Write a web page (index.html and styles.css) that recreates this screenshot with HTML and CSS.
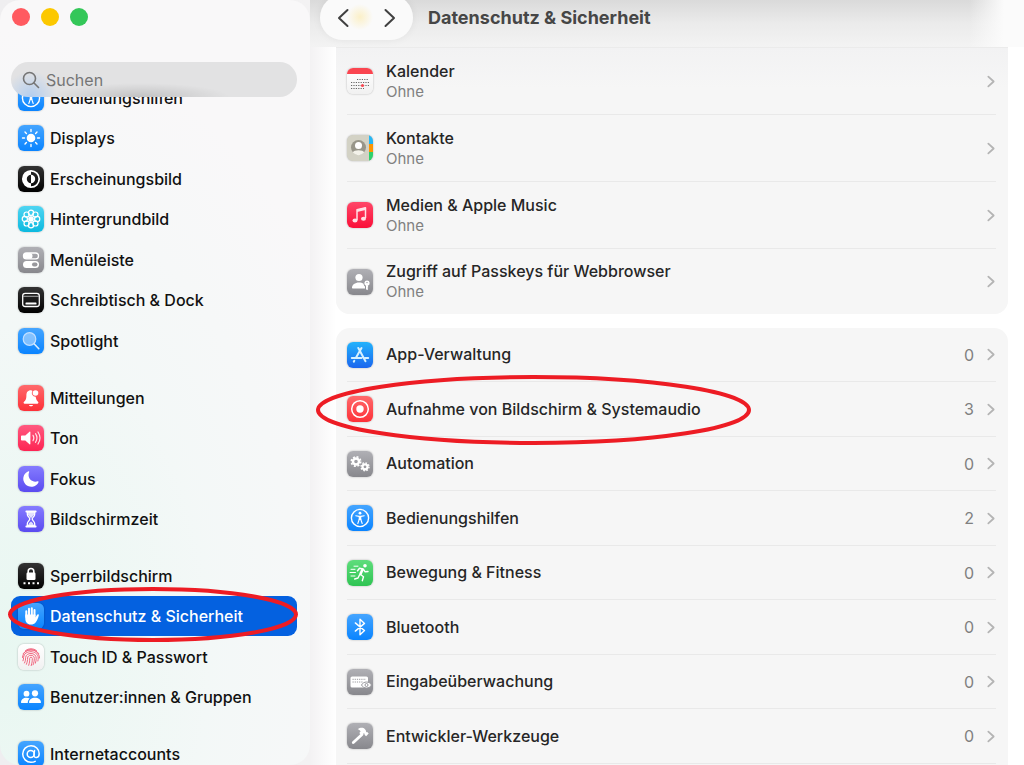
FILE: index.html
```html
<!DOCTYPE html>
<html lang="de">
<head>
    <meta charset="UTF-8">
    <meta name="viewport" content="width=device-width, initial-scale=1.0">
    <title>Datenschutz &amp; Sicherheit</title>
    <link rel="stylesheet" href="styles.css">
</head>
<body>
    <aside class="sidebar">
        <div class="sidebar-header">
            <div class="window-controls">
                <button type="button" class="control close" aria-label="Schließen"></button>
                <button type="button" class="control minimize" aria-label="Minimieren"></button>
                <button type="button" class="control maximize" aria-label="Vollbild"></button>
            </div>
            <label class="search">
                <svg viewBox="0 0 18 18" width="18" height="18" fill="none" stroke="#757575" stroke-width="1.6" stroke-linecap="round"><circle cx="7.5" cy="7.5" r="6"/><path d="M12 12l4.500 4.500"/></svg>
                <input type="text" placeholder="Suchen" aria-label="Suchen">
            </label>
        </div>

        <nav class="menu">
            <div class="menu-group">
                <a href="#" class="menu-item">
                    <svg class="icon blue" viewBox="0 0 26 26" fill="none" stroke="#fff"><circle cx="13" cy="13" r="8.600" stroke-width="1.4"/><circle cx="13" cy="8.200" r="1.400" fill="#fff" stroke="none"/><path d="M8.800 10.700l3.200.7h2l3.200-.7" stroke-width="1.100" stroke-linecap="round"/><path d="M13 11v4" stroke-width="2.600"/><path d="M12.200 14.500l-1.400 4M13.800 14.500l1.400 4" stroke-width="1.100" stroke-linecap="round"/></svg>
                    Bedienungshilfen
                </a>
                <a href="#" class="menu-item">
                    <svg class="icon blue" viewBox="0 0 26 26"><circle cx="13" cy="13" r="4.300" fill="#fff"/><path d="M13 4.500v2M13 19.500v2M4.500 13h2M19.500 13h2M7 7l1.400 1.400M17.600 17.600L19 19M7 19l1.400-1.400M17.600 8.400L19 7" stroke="#fff" stroke-width="1.400" stroke-linecap="round"/></svg>
                    Displays
                </a>
                <a href="#" class="menu-item">
                    <svg class="icon black" viewBox="0 0 26 26"><circle cx="13" cy="13" r="8.200" fill="none" stroke="#fff" stroke-width="1.700"/><path d="M13 4.800a8.200 8.200 0 0 0 0 16.400v-4a4.200 4.200 0 0 1 0-8.400z" fill="#fff"/><path d="M13 8.800a4.200 4.200 0 0 1 0 8.400z" fill="#fff"/></svg>
                    Erscheinungsbild
                </a>
                <a href="#" class="menu-item">
                    <svg class="icon cyan" viewBox="0 0 26 26" fill="none" stroke="#fff" stroke-width="1.200"><circle cx="13" cy="6.800" r="2.600"/><circle cx="17.400" cy="8.600" r="2.600"/><circle cx="19.200" cy="13" r="2.600"/><circle cx="17.400" cy="17.400" r="2.600"/><circle cx="13" cy="19.200" r="2.600"/><circle cx="8.600" cy="17.400" r="2.600"/><circle cx="6.800" cy="13" r="2.600"/><circle cx="8.600" cy="8.600" r="2.600"/><circle cx="13" cy="13" r="2" fill="#fff"/><path d="M13 9v8M9 13h8M10.200 10.200l5.600 5.600M15.800 10.200l-5.600 5.600"/></svg>
                    Hintergrundbild
                </a>
                <a href="#" class="menu-item">
                    <svg class="icon gray" viewBox="0 0 26 26"><rect x="5.500" y="6" width="15" height="5.800" rx="2.900" fill="none" stroke="#fff" stroke-width="1.300"/><rect x="5.500" y="6" width="9" height="5.800" rx="2.900" fill="#fff"/><rect x="5" y="14" width="16" height="7" rx="3.500" fill="#fff"/><rect x="14" y="15.500" width="5.500" height="4" rx="2" fill="#98989d"/></svg>
                    Menüleiste
                </a>
                <a href="#" class="menu-item">
                    <svg class="icon black" viewBox="0 0 26 26"><rect x="4.700" y="6.300" width="16.600" height="13.200" rx="2.500" fill="none" stroke="#fff" stroke-width="1.300"/><path d="M5 9.300h16" stroke="#aaa"/><rect x="7.500" y="15.500" width="11" height="2" rx=".6" fill="#fff"/></svg>
                    Schreibtisch &amp; Dock
                </a>
                <a href="#" class="menu-item">
                    <svg class="icon blue" viewBox="0 0 26 26"><circle cx="11.500" cy="11" r="6.300" fill="#a5d1ff" fill-opacity=".7" stroke="#c3e0ff" stroke-width="1.200"/><path d="M16.300 16l4.500 4.700" stroke="#d9ecff" stroke-width="1.600" stroke-linecap="round"/></svg>
                    Spotlight
                </a>
            </div>

            <div class="menu-group">
                <a href="#" class="menu-item">
                    <svg class="icon red" viewBox="0 0 26 26"><path d="M13 5.200c-3.500 0-4.600 2.500-4.600 5.200 0 4-1.200 5-2.600 6.700-.5.800-.1 1.600.8 1.600h12.800c.9 0 1.300-.8.800-1.600-1.200-1.500-2.200-2.500-2.500-5.300a3.800 3.800 0 0 1-3.300-5.900c-.4-.5-.8-.7-1.400-.7zM10.800 20h4.400c-.8 1.800-3.600 1.800-4.400 0z" fill="#fff"/><circle cx="17.500" cy="8" r="2.800" fill="#fff"/></svg>
                    Mitteilungen
                </a>
                <a href="#" class="menu-item">
                    <svg class="icon pink" viewBox="0 0 26 26"><path d="M3.800 10.500h3.500l4.200-3.700c.5-.4.900-.2.900.4v11.600c0 .6-.4.800-.9.400l-4.200-3.700H3.800c-.5 0-.8-.3-.8-.8v-3.400c0-.5.3-.8.800-.8z" fill="#fff"/><path d="M15 10.300c1 1.600 1 3.800 0 5.400M17.500 8.700c1.700 2.500 1.700 6.100 0 8.600M20 7c2.400 3.600 2.400 8.400 0 12" fill="none" stroke="#fff" stroke-opacity=".85" stroke-width="1.200" stroke-linecap="round"/></svg>
                    Ton
                </a>
                <a href="#" class="menu-item">
                    <svg class="icon indigo" viewBox="0 0 26 26"><path d="M10.400 5.300c.5-.3 1 .1.800.7-2.500 6 2.600 11 8.500 9.300.7-.2 1.100.3.800.9A8 8 0 1 1 10.400 5.300z" fill="#fff"/></svg>
                    Fokus
                </a>
                <a href="#" class="menu-item">
                    <svg class="icon indigo" viewBox="0 0 26 26"><path d="M8.300 5.500h9.400M8.300 20.500h9.400" stroke="#fff" stroke-width="1.800" stroke-linecap="round"/><path d="M9.300 6v2.200c0 2.400 2.500 3.300 2.500 4.800s-2.500 2.400-2.500 4.800V20h7.400v-2.200c0-2.400-2.500-3.300-2.500-4.800s2.500-2.400 2.500-4.800V6z" fill="none" stroke="#fff" stroke-width="1.300"/><path d="M10 6.500h6v2.200l-3 3.500-3-3.500zM10 20c.4-3 2-3.500 3-4.500 1 1 2.600 1.500 3 4.500z" fill="#fff" fill-opacity=".8"/></svg>
                    Bildschirmzeit
                </a>
            </div>

            <div class="menu-group">
                <a href="#" class="menu-item">
                    <svg class="icon black" viewBox="0 0 26 26"><path d="M10.200 10V8.300a2.800 2.800 0 0 1 5.600 0V10" fill="none" stroke="#fff" stroke-width="1.600"/><rect x="8.500" y="9.500" width="9" height="7.500" rx="1.300" fill="#fff"/><path d="M5.500 20.300h2M10 20.300h2M14.500 20.300h2M19 20.300h2" stroke="#fff" stroke-width="2"/></svg>
                    Sperrbildschirm
                </a>
                <a href="#" class="menu-item active" aria-current="page">
                    <svg class="icon blue" viewBox="0 0 26 26"><path d="M8.300 14V8.200M11 12V5.700M13.800 12V5.200M16.500 13V7" stroke="#fff" stroke-width="2" stroke-linecap="round"/><path d="M7.300 11.500h10.200v3l1.600-2.700c.7-1 2-.6 1.700.6-.7 2.500-1.700 5.200-3.200 7-1.300 1.500-2.700 2.100-4.700 2.100-3.600 0-5.600-2.500-5.600-6z" fill="#fff"/></svg>
                    Datenschutz &amp; Sicherheit
                    <svg class="marker marker-menu" aria-hidden="true"><ellipse cx="50%" cy="50%"/></svg>
                </a>
                <a href="#" class="menu-item">
                    <svg class="icon white" viewBox="0 0 26 26" fill="none" stroke="#f0667f" stroke-width="1" stroke-linecap="round"><path d="M7.500 6.500a9 9 0 0 1 11 0M5.300 9.500a9.500 9.500 0 0 1 15.400 0M4.500 13.500c.3-6.500 6-7.500 8.500-7.500s8.400 1.500 8.500 8M5 16.800c.4-1.300.6-2.300.6-3.300.2-4.200 3.900-5.800 7.400-5.800s7.200 2.200 7.200 6.300c0 1 0 1.900-.3 3M6.500 19c1-2 1.100-3.700 1.100-5.300.2-3 2.600-4.200 5.400-4.200s5.200 1.700 5.200 4.700c0 1.800-.2 3.200-.8 5M8.400 20.300c1-2.500 1.200-4.300 1.200-6.300 0-1.700 1.500-2.700 3.400-2.700s3.300 1.200 3.300 3c0 2.400-.3 4.200-1.200 6.500M10.700 21.300c.8-2.400 1-4.400 1-6.900 0-1.600 2.600-1.600 2.600 0 0 2.500-.2 4.700-1.100 7.200"/></svg>
                    Touch ID &amp; Passwort
                </a>
                <a href="#" class="menu-item">
                    <svg class="icon blue" viewBox="0 0 26 26" fill="#fff"><circle cx="8.500" cy="9.700" r="2.900"/><circle cx="17" cy="9.300" r="3.100"/><path d="M3 18.500c0-2.900 2.300-4.800 5.300-4.800 1.300 0 2.400.3 3.300.9-1.300 1.200-1.800 2.500-1.800 4.400H3.500c-.3 0-.5-.2-.5-.5zM11 18.500c0-2.900 2.700-4.800 6-4.800s6 1.900 6 4.800c0 .3-.2.500-.5.500h-11c-.3 0-.5-.2-.5-.5z"/></svg>
                    Benutzer:innen &amp; Gruppen
                </a>
            </div>

            <div class="menu-group">
                <a href="#" class="menu-item">
                    <svg class="icon blue" viewBox="0 0 26 26" fill="none" stroke="#fff" stroke-width="1.500" stroke-linecap="round"><circle cx="12.700" cy="13" r="3.500"/><path d="M16.500 9.500l-.5 4.700c-.3 3.300 5.200 3.300 5.200-1.500 0-4.700-3.700-8-8.200-8a8.300 8.300 0 0 0 0 16.600c1.600 0 3-.3 4.200-1"/></svg>
                    Internetaccounts
                </a>
            </div>
        </nav>
    </aside>

    <main class="content">
        <header class="toolbar">
            <div class="nav-buttons">
                <button type="button" aria-label="Zurück"><svg viewBox="0 0 12 20" width="12" height="20"><path d="M10.500 2L2 10l8.500 8"/></svg></button>
                <button type="button" aria-label="Vorwärts"><svg viewBox="0 0 12 20" width="12" height="20"><path d="M1.500 2L10 10l-8.500 8"/></svg></button>
            </div>
            <h1>Datenschutz &amp; Sicherheit</h1>
        </header>

        <section class="card card-services">
            <a href="#" class="row">
                <svg class="icon white" viewBox="0 0 26 26"><path d="M0 6V0h26v6z" fill="#fa4550"/><path d="M10 11.500h12M4 14.500h18M4 17.500h18M4 20.500h13" stroke="#666" stroke-width="1.200" stroke-dasharray="1.200 1.200"/><circle cx="15.500" cy="17.500" r="1.500" fill="#fa4550"/></svg>
                <span class="text"><span class="title">Kalender</span><span class="subtitle">Ohne</span></span>
                <svg class="chevron" viewBox="0 0 9 14"><path d="M1.500 1.500L7.500 7l-6 5.500"/></svg>
            </a>
            <a href="#" class="row">
                <svg class="icon beige" viewBox="0 0 26 26"><path d="M22 0h4v9h-4z" fill="#26b7f5"/><path d="M22 9h4v8h-4z" fill="#ff9500"/><path d="M22 17h4v9h-4z" fill="#2fd16b"/><circle cx="11.500" cy="12.500" r="7.500" fill="#98968a"/><circle cx="11.500" cy="10.500" r="3.500" fill="#fff"/><path d="M5.800 17.500c1-3 10.400-3 11.400 0a7.500 7.500 0 0 1-11.400 0z" fill="#f3f2e9"/></svg>
                <span class="text"><span class="title">Kontakte</span><span class="subtitle">Ohne</span></span>
                <svg class="chevron" viewBox="0 0 9 14"><path d="M1.500 1.500L7.500 7l-6 5.500"/></svg>
            </a>
            <a href="#" class="row">
                <svg class="icon music" viewBox="0 0 26 26"><path d="M10 18V7.800l8.500-2V16" fill="none" stroke="#ffdfe5" stroke-width="1.500" stroke-linejoin="round"/><path d="M10 7.500l8.500-2V8L10 10z" fill="#ffdfe5"/><ellipse cx="8" cy="18.500" rx="2.500" ry="2" fill="#ffdfe5"/><ellipse cx="16.500" cy="16.800" rx="2.500" ry="2" fill="#ffdfe5"/></svg>
                <span class="text"><span class="title">Medien &amp; Apple Music</span><span class="subtitle">Ohne</span></span>
                <svg class="chevron" viewBox="0 0 9 14"><path d="M1.500 1.500L7.500 7l-6 5.500"/></svg>
            </a>
            <a href="#" class="row">
                <svg class="icon gray" viewBox="0 0 26 26" fill="#fff"><circle cx="12" cy="8.500" r="3.600"/><path d="M5 18.800c0-3 3-5.300 7-5.300 1.800 0 3.400.4 4.600 1.200.1 1.300.6 2.200 1.400 2.800v2H5.700c-.5 0-.7-.2-.7-.7z"/><path d="M20 11.500a2.700 2.700 0 0 0-1 5.200V20l1 1.300 1.300-1.300-.8-1 .8-1-.6-1.200a2.700 2.700 0 0 0-.7-5.300z"/><circle cx="20" cy="13.600" r=".7" fill="#8e8e93"/></svg>
                <span class="text"><span class="title">Zugriff auf Passkeys für Webbrowser</span><span class="subtitle">Ohne</span></span>
                <svg class="chevron" viewBox="0 0 9 14"><path d="M1.500 1.500L7.500 7l-6 5.500"/></svg>
            </a>
        </section>

        <section class="card card-permissions">
            <a href="#" class="row">
                <svg class="icon store" viewBox="0 0 26 26" fill="none" stroke="#d5f0ff" stroke-width="2" stroke-linecap="round"><path d="M14.500 6L8.800 16M11.300 6L18.500 19.200M4.800 16h9.700M18 16h3.200M7.300 18.800l-.5.800"/></svg>
                <span class="text"><span class="title">App-Verwaltung</span></span>
                <span class="count">0</span>
                <svg class="chevron" viewBox="0 0 9 14"><path d="M1.500 1.500L7.500 7l-6 5.500"/></svg>
            </a>
            <a href="#" class="row">
                <svg class="icon red" viewBox="0 0 26 26"><circle cx="13" cy="13" r="8.300" fill="none" stroke="#fff" stroke-width="1.500"/><circle cx="13" cy="13" r="3.700" fill="#fff"/></svg>
                <span class="text"><span class="title">Aufnahme von Bildschirm &amp; Systemaudio</span></span>
                <span class="count">3</span>
                <svg class="chevron" viewBox="0 0 9 14"><path d="M1.500 1.500L7.500 7l-6 5.500"/></svg>
                <svg class="marker marker-row" aria-hidden="true"><ellipse cx="50%" cy="50%"/></svg>
            </a>
            <a href="#" class="row">
                <svg class="icon gray" viewBox="0 0 26 26" fill="none" stroke="#fff"><circle cx="9" cy="10.500" r="3" stroke-width="2.400"/><circle cx="9" cy="10.500" r="4.700" stroke-width="1.600" stroke-dasharray="2 1.690"/><circle cx="18" cy="15.800" r="2.500" stroke-width="2.200"/><circle cx="18" cy="15.800" r="4" stroke-width="1.400" stroke-dasharray="1.600 1.540"/></svg>
                <span class="text"><span class="title">Automation</span></span>
                <span class="count">0</span>
                <svg class="chevron" viewBox="0 0 9 14"><path d="M1.500 1.500L7.500 7l-6 5.500"/></svg>
            </a>
            <a href="#" class="row">
                <svg class="icon blue" viewBox="0 0 26 26" fill="none" stroke="#fff"><circle cx="13" cy="13" r="8.600" stroke-width="1.4"/><circle cx="13" cy="8.200" r="1.400" fill="#fff" stroke="none"/><path d="M8.800 10.700l3.200.7h2l3.200-.7" stroke-width="1.100" stroke-linecap="round"/><path d="M13 11v4" stroke-width="2.600"/><path d="M12.200 14.500l-1.400 4M13.800 14.500l1.400 4" stroke-width="1.100" stroke-linecap="round"/></svg>
                <span class="text"><span class="title">Bedienungshilfen</span></span>
                <span class="count">2</span>
                <svg class="chevron" viewBox="0 0 9 14"><path d="M1.500 1.500L7.500 7l-6 5.500"/></svg>
            </a>
            <a href="#" class="row">
                <svg class="icon green" viewBox="0 0 26 26" fill="none" stroke="#fff" stroke-linecap="round" stroke-linejoin="round"><circle cx="18" cy="5.800" r="1.800" fill="#fff" stroke="none"/><path d="M15.500 9.500l-2 4.500" stroke-width="2.600"/><path d="M16 9l-3.500-.8-2 2.500M16.500 9.500l1.700 2.300 2.800-.3M13.500 14.500l3 2.200-1.200 4M12.500 15l-1.500 3-3.300 1" stroke-width="1.400"/><path d="M7 6.200h4M4 9.300h4M3 12.500h5.500M4 16h4" stroke-width="1"/></svg>
                <span class="text"><span class="title">Bewegung &amp; Fitness</span></span>
                <span class="count">0</span>
                <svg class="chevron" viewBox="0 0 9 14"><path d="M1.500 1.500L7.500 7l-6 5.500"/></svg>
            </a>
            <a href="#" class="row">
                <svg class="icon blue" viewBox="0 0 26 26"><path d="M8.300 8.900l9.200 7.700L13 20.800V5.200l4.500 4.200-9.200 7.700" fill="none" stroke="#fff" stroke-width="1.400" stroke-linecap="round" stroke-linejoin="round"/></svg>
                <span class="text"><span class="title">Bluetooth</span></span>
                <span class="count">0</span>
                <svg class="chevron" viewBox="0 0 9 14"><path d="M1.500 1.500L7.500 7l-6 5.500"/></svg>
            </a>
            <a href="#" class="row">
                <svg class="icon gray" viewBox="0 0 26 26"><rect x="3.500" y="7.500" width="17.500" height="11" rx="1.600" fill="#fff"/><path d="M5.500 10.300h13.500M5.500 13h10" stroke="#98989d" stroke-width="1" stroke-dasharray="1.200 1"/><path d="M14.500 16c2-4 8-4 10 0-2 4-8 4-10 0z" fill="#fff" stroke="#98989d" stroke-width="1"/><circle cx="19.500" cy="16" r="1.500" fill="none" stroke="#98989d"/></svg>
                <span class="text"><span class="title">Eingabeüberwachung</span></span>
                <span class="count">0</span>
                <svg class="chevron" viewBox="0 0 9 14"><path d="M1.500 1.500L7.500 7l-6 5.500"/></svg>
            </a>
            <a href="#" class="row">
                <svg class="icon gray" viewBox="0 0 26 26"><path d="M15 11.500l-8.700 8" stroke="#fff" stroke-width="2.800" stroke-linecap="round"/><path d="M10.700 6.300c2.800-2 5.500-1.800 7.300 0l1 1.500.2 1.500 1-.3 1.500 1.600-2.600 2.600-1.600-1.500.3-1-1.500-.1-1.800 1.600-2.200-2.200 1.300-1.600c-.8-1.300-1.700-1.600-2.900-2.100z" fill="#fff"/></svg>
                <span class="text"><span class="title">Entwickler-Werkzeuge</span></span>
                <span class="count">0</span>
                <svg class="chevron" viewBox="0 0 9 14"><path d="M1.500 1.500L7.500 7l-6 5.500"/></svg>
            </a>
        </section>
    </main>
</body>
</html>
```
FILE: styles.css
```css
* {
    box-sizing: border-box;
}
body {
    display: flex;
    height: 100vh;
    margin: 0;
    overflow: hidden;
    background: linear-gradient(to right, #efeef0 0, #f3f2f3 310px, #ffffff 336px);
    font-family: Inter, "Liberation Sans", sans-serif;
    font-size: 16px;
    color: #262626;
}
a {
    color: inherit;
    text-decoration: none;
}
button {
    border: none;
    padding: 0;
    cursor: pointer;
}

/* Sidebar */
.sidebar {
    flex: 0 0 310px;
    height: 100vh;
    padding: 0 13px 0 11px;
    overflow: hidden;
    border-radius: 20px;
    background:
        radial-gradient(ellipse 400px 620px at 0 85%, #e8f7f1, rgba(240, 248, 246, 0.6) 55%, transparent),
        #f9f8f9;
}
.sidebar-header {
    position: relative;
    z-index: 1;
}
.window-controls {
    display: flex;
    gap: 11px;
    padding: 8px 0 36px 1px;
}
.control {
    width: 18px;
    height: 18px;
    border-radius: 50%;
}
.close {
    background-color: #ff5a60;
}
.minimize {
    background-color: #fcc800;
}
.maximize {
    background-color: #34c759;
}
.search {
    display: flex;
    align-items: center;
    gap: 6px;
    height: 35px;
    padding: 0 11px;
    border-radius: 18px;
    background:
        radial-gradient(ellipse 90px 14px at 45% 100%, rgba(0, 0, 0, 0.14), transparent),
        radial-gradient(circle 26px at 20px 100%, rgba(120, 180, 255, 0.45), transparent),
        #e2e2e3;
}
.search input {
    flex: 1;
    min-width: 0;
    padding: 0;
    border: none;
    outline: none;
    background: none;
    font: inherit;
}
.search input::placeholder {
    color: #757575;
}
.menu {
    margin-top: -19px;
}
.menu-group {
    margin-bottom: 17px;
}
.menu-item {
    position: relative;
    display: flex;
    align-items: center;
    gap: 6px;
    height: 40px;
    padding: 0 7px;
    border-radius: 9px;
    color: #111111;
    font-weight: 500;
    white-space: nowrap;
}
.menu-item:nth-child(even) {
    margin-bottom: 1px;
}
.menu-item.active {
    background-color: #0461e0;
    color: #ffffff;
}

/* Icon tiles */
.icon {
    flex: none;
    width: 26px;
    height: 26px;
    border-radius: 6px;
    box-shadow: 0 0 2px rgba(0, 0, 0, 0.3);
}
.blue {
    background: linear-gradient(#45a5ff, #0a84ff);
}
.black {
    background: linear-gradient(#333333, #000000);
}
.cyan {
    background: linear-gradient(#4fd5f2, #0cb9df);
}
.gray {
    background: linear-gradient(#b0b0b5, #88888d);
}
.red {
    background: linear-gradient(#ff6a6c, #fd3038);
}
.pink {
    background: linear-gradient(#ff5a80, #fd2453);
}
.indigo {
    background: linear-gradient(#857cff, #5a4bf0);
}
.green {
    background: linear-gradient(#5fdd7c, #2fc453);
}
.white {
    background: linear-gradient(#ffffff, #f1f1f1);
}
.beige {
    background-color: #d3d2c5;
}
.music {
    background: linear-gradient(#ff4668, #fa0f38);
}
.store {
    background: linear-gradient(#22b2fc, #1b66ee);
}

/* Content */
.content {
    flex: 1;
    min-width: 0;
    padding: 0 16px 0 26px;
}
.toolbar {
    display: flex;
    align-items: flex-start;
    gap: 15px;
    height: 47px;
    margin: 0 -16px 0 -26px;
    padding-left: 10px;
    background:
        linear-gradient(to right, transparent calc(100% - 55px), #fbfbfb calc(100% - 20px)),
        linear-gradient(#dadada, #ebebeb 50%, #f3f3f3);
}
.nav-buttons {
    display: flex;
    justify-content: space-between;
    width: 93px;
    height: 45px;
    margin-top: -5px;
    padding: 0 17px;
    border-radius: 23px;
    background: radial-gradient(circle at 40px 22px, #fbf0c8, #fafafa 13px);
    box-shadow: 0 0 8px rgba(0, 0, 0, 0.06);
}
.nav-buttons button {
    display: flex;
    align-items: center;
    background: none;
}
.nav-buttons path {
    fill: none;
    stroke: #404040;
    stroke-width: 2;
    stroke-linecap: round;
    stroke-linejoin: round;
}
h1 {
    margin: 0;
    font-size: 18px;
    font-weight: 700;
    line-height: 35px;
    color: #464646;
    white-space: nowrap;
}
.card {
    padding: 0 12px 0 11px;
    background-color: #f6f6f6;
}
.card-services {
    margin-bottom: 14px;
    border-top: 1px solid #ebebeb;
    border-radius: 0 0 14px 14px;
    background-image: linear-gradient(#f2f2f3, #f6f6f6 40px);
}
.card-permissions {
    padding-bottom: 20px;
    border-radius: 14px;
}
.row {
    position: relative;
    display: flex;
    align-items: center;
    gap: 13px;
    height: 54px;
    border-bottom: 1px solid #e9e9e9;
}
.card-permissions .row:nth-child(even) {
    height: 55px;
}
.card-services .row {
    height: 67px;
}
.card-services .row:last-child {
    height: 65px;
    border-bottom: none;
}
.text {
    flex: 1;
    display: flex;
    flex-direction: column;
    white-space: nowrap;
}
.title {
    font-weight: 500;
    line-height: 21px;
}
.subtitle {
    font-size: 15px;
    line-height: 20px;
    color: #808080;
}
.count {
    color: #808080;
}
.chevron {
    flex: none;
    width: 8px;
    height: 13px;
    margin-right: 1px;
    fill: none;
    stroke: #b4b4b4;
    stroke-width: 2;
    stroke-linecap: round;
    stroke-linejoin: round;
}

/* Red highlight ellipses */
.marker {
    position: absolute;
    z-index: 2;
    overflow: visible;
    pointer-events: none;
}
.marker ellipse {
    rx: calc(50% - 2px);
    ry: calc(50% - 2px);
    fill: none;
    stroke: #ed1c24;
    stroke-width: 4px;
}
.marker-menu {
    top: -9px;
    left: -3px;
    width: calc(100% + 4px);
    height: 55px;
}
.marker-row {
    top: -7px;
    left: -31px;
    width: 435px;
    height: 70px;
}
```
